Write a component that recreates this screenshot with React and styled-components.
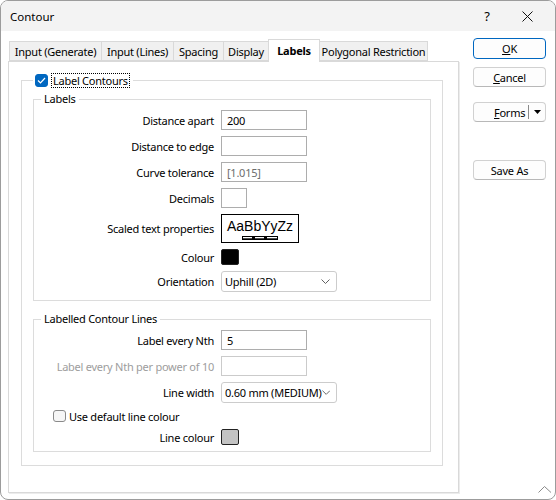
import React from 'react';
import styled, { createGlobalStyle } from 'styled-components';

const GlobalStyle = createGlobalStyle`
  html, body {
    margin: 0;
    padding: 0;
    background: #fff;
  }
  body {
    font-family: "Segoe UI", "Noto Sans", sans-serif;
    font-size: 11px;
    letter-spacing: -0.25px;
    color: #000;
  }
  *, *:before, *:after {
    box-sizing: border-box;
  }
`;

const Window = styled.div`
  position: relative;
  width: 556px;
  height: 500px;
  border: 1px solid #9c9c9c;
  border-radius: 8px;
  overflow: hidden;
  background: #fff;
  display: flex;
  flex-direction: column;
`;

const TitleBar = styled.div`
  height: 30px;
  flex: none;
  background: #f3f3f3;
  display: flex;
  align-items: center;
  padding: 0 8px 0 9px;
  font-size: 11.5px;
  letter-spacing: 0;
`;

const TitleText = styled.span`
  flex: 1;
`;

const CaptionButton = styled.div`
  width: 40px;
  height: 30px;
  display: flex;
  align-items: center;
  justify-content: center;
  font-size: 13px;
`;

const Body = styled.div`
  flex: 1;
  display: flex;
  padding: 7px 9px 0 7px;
`;

const TabsColumn = styled.div`
  width: 451px;
  display: flex;
  flex-direction: column;
`;

const TabRow = styled.div`
  height: 23px;
  display: flex;
  align-items: flex-end;
  padding-left: 1px;
  position: relative;
  z-index: 1;
`;

const Tab = styled.div`
  width: ${p => p.$w}px;
  height: ${p => (p.$active ? 23 : 20)}px;
  margin-right: -1px;
  margin-bottom: ${p => (p.$active ? -1 : 0)}px;
  border: 1px solid #d9d9d9;
  border-bottom: ${p => (p.$active ? 'none' : '1px solid #d9d9d9')};
  background: ${p => (p.$active ? '#fff' : '#f0f0f0')};
  font-weight: ${p => (p.$active ? 700 : 400)};
  display: flex;
  align-items: center;
  justify-content: center;
  padding-bottom: ${p => (p.$active ? 2 : 0)}px;
  white-space: nowrap;
  position: relative;
  z-index: ${p => (p.$active ? 2 : 1)};
`;

const Panel = styled.div`
  height: 432px;
  border: 1px solid #d9d9d9;
  box-shadow: 1px 1px 0 #ececec;
  background: #fff;
  padding: 11px 0 0 12px;
`;

const Group = styled.fieldset`
  margin: ${p => p.$margin || '0'};
  width: ${p => p.$w}px;
  border: 1px solid #dcdcdc;
  padding: ${p => p.$pad || '0'};
  min-inline-size: 0;
`;

const Legend = styled.legend`
  margin-left: ${p => p.$ml || 7}px;
  padding: 0 3px 0 ${p => p.$pl || 3}px;
  line-height: 16px;
  display: flex;
  align-items: center;
`;

const FocusText = styled.span`
  border: 1px dotted #000;
  padding: 0 1px;
  line-height: 13px;
`;

const Check = styled.span`
  width: 13px;
  height: ${p => p.$h || 13}px;
  border-radius: 3px;
  border: 1px solid ${p => (p.$checked ? '#0067c0' : '#8a8a8a')};
  background: ${p => (p.$checked ? '#0067c0' : '#f6f6f6')};
  display: inline-flex;
  align-items: center;
  justify-content: center;
  margin-right: 3px;
  flex: none;
`;

const FormGrid = styled.div`
  display: grid;
  grid-template-columns: 180px 1fr;
  column-gap: 7px;
  row-gap: 6px;
  align-items: center;
`;

const Label = styled.div`
  text-align: right;
  white-space: nowrap;
  color: ${p => (p.$disabled ? '#9d9d9d' : '#000')};
`;

const Field = styled.div`
  width: ${p => p.$w || 86}px;
  height: 20px;
  border: 1px solid ${p => (p.$disabled ? '#cbcbcb' : '#adadad')};
  background: #fff;
  padding-left: 5px;
  display: flex;
  align-items: center;
  color: ${p => (p.$muted ? '#6d6d6d' : '#000')};
`;

const Select = styled.div`
  width: 116px;
  height: 21px;
  border: 1px solid #cccccc;
  border-radius: 3px;
  background: #fff;
  padding: 0 6px 0 3px;
  display: flex;
  align-items: center;
  justify-content: space-between;
  white-space: nowrap;
`;

const Preview = styled.div`
  width: 78px;
  height: 29px;
  border: 1px solid #000;
  display: flex;
  flex-direction: column;
  align-items: center;
  padding-top: 4px;

  svg {
    display: block;
    margin-top: 2px;
  }
`;

const PreviewText = styled.span`
  font-family: "Liberation Sans", Arial, sans-serif;
  font-size: 14px;
  line-height: 15px;
  letter-spacing: 0;
`;

const Swatch = styled.div`
  width: 18px;
  height: 16px;
  border-radius: 2px;
  background: ${p => p.$color};
  border: 1px solid #222;
`;

const CheckRow = styled.div`
  grid-column: 1 / -1;
  height: 14px;
  padding-left: 19px;
  display: flex;
  align-items: center;
`;

const ButtonColumn = styled.div`
  width: 73px;
  margin-left: 14px;
  display: flex;
  flex-direction: column;
`;

const Button = styled.div`
  height: ${p => (p.$primary ? 21 : 20)}px;
  margin-top: ${p => p.$mt || 0}px;
  border: 1px solid ${p => (p.$primary ? '#0067c0' : '#d1d1d1')};
  border-bottom-color: ${p => (p.$primary ? '#0067c0' : '#b8b8b8')};
  border-radius: 4px;
  background: #fdfdfd;
  display: flex;
  align-items: center;
  justify-content: center;
`;

const SplitMain = styled.span`
  flex: 1;
  padding-left: 20px;
  text-align: left;
`;

const SplitArrow = styled.span`
  width: 17px;
  height: 14px;
  border-left: 1px solid #8a8a8a;
  display: flex;
  align-items: center;
  justify-content: center;
`;

const Grip = styled.svg`
  position: absolute;
  right: 3px;
  bottom: 6px;
`;

const Chevron = () => (
  <svg width="9" height="5" viewBox="0 0 9 5">
    <polyline points="0.5,0.5 4.5,4.5 8.5,0.5" fill="none" stroke="#606060" strokeWidth="1" />
  </svg>
);

function TextRow({ label, value, w, disabled, muted }) {
  return (
    <>
      <Label $disabled={disabled}>{label}</Label>
      <Field $w={w} $disabled={disabled} $muted={muted}>{value}</Field>
    </>
  );
}

const tabs = [
  { name: 'Input (Generate)', w: 93 },
  { name: 'Input (Lines)', w: 73 },
  { name: 'Spacing', w: 51 },
  { name: 'Display', w: 46 },
  { name: 'Labels', w: 52, active: true },
  { name: 'Polygonal Restriction', w: 109 },
];

export default function App() {
  return (
    <>
      <GlobalStyle />
      <Window>
        <TitleBar>
          <TitleText>Contour</TitleText>
          <CaptionButton>?</CaptionButton>
          <CaptionButton>
            <svg width="11" height="11" viewBox="0 0 11 11">
              <path d="M0.5 0.5 L10.5 10.5 M10.5 0.5 L0.5 10.5" stroke="#111" strokeWidth="1" />
            </svg>
          </CaptionButton>
        </TitleBar>
        <Body>
          <TabsColumn>
            <TabRow>
              {tabs.map(t => (
                <Tab key={t.name} $w={t.w} $active={t.active}>{t.name}</Tab>
              ))}
            </TabRow>
            <Panel>
              <Group $w={422} $pad="0 0 13px 0">
                <Legend $ml={11} $pl={2}>
                  <Check $checked>
                    <svg width="9" height="7" viewBox="0 0 9 7">
                      <polyline points="1,3.5 3.5,6 8,1" fill="none" stroke="#fff" strokeWidth="1.2" />
                    </svg>
                  </Check>
                  <FocusText>Label Contours</FocusText>
                </Legend>

                <Group $w={398} $margin="3px 0 0 11px" $pad="3px 0 8px 0">
                  <Legend>Labels</Legend>
                  <FormGrid>
                    <TextRow label="Distance apart" value="200" />
                    <TextRow label="Distance to edge" value="" />
                    <TextRow label="Curve tolerance" value="[1.015]" muted />
                    <TextRow label="Decimals" value="" w={26} />
                    <Label>Scaled text properties</Label>
                    <Preview>
                      <PreviewText>AaBbYyZz</PreviewText>
                      <svg width="36" height="4" viewBox="0 0 36 4">
                        <rect x="0" y="0" width="36" height="4" fill="#000" />
                        <rect x="1" y="1" width="9" height="1.3" fill="#fff" />
                        <rect x="13" y="1" width="9" height="1.3" fill="#fff" />
                        <rect x="25" y="1" width="10" height="1.3" fill="#fff" />
                      </svg>
                    </Preview>
                    <Label>Colour</Label>
                    <Swatch $color="#000" />
                    <Label>Orientation</Label>
                    <Select>
                      <span>Uphill (2D)</span>
                      <Chevron />
                    </Select>
                  </FormGrid>
                </Group>

                <Group $w={398} $margin="10px 0 0 11px" $pad="3px 0 6px 0">
                  <Legend>Labelled Contour Lines</Legend>
                  <FormGrid>
                    <TextRow label="Label every Nth" value="5" />
                    <TextRow label="Label every Nth per power of 10" value="" disabled />
                    <Label>Line width</Label>
                    <Select>
                      <span>0.60 mm (MEDIUM)</span>
                      <Chevron />
                    </Select>
                    <CheckRow>
                      <Check $h={12} />
                      <span>Use default line colour</span>
                    </CheckRow>
                    <Label>Line colour</Label>
                    <Swatch $color="#c3c3c3" />
                  </FormGrid>
                </Group>
              </Group>
            </Panel>
          </TabsColumn>

          <ButtonColumn>
            <Button $primary><span><u>O</u>K</span></Button>
            <Button $mt={8}><span><u>C</u>ancel</span></Button>
            <Button $mt={15}>
              <SplitMain><u>F</u>orms</SplitMain>
              <SplitArrow>
                <svg width="7" height="4" viewBox="0 0 7 4">
                  <polygon points="0,0 7,0 3.5,4" fill="#000" />
                </svg>
              </SplitArrow>
            </Button>
            <Button $mt={38}>Save As</Button>
          </ButtonColumn>
        </Body>
        <Grip width="14" height="8" viewBox="0 0 14 8">
          <polyline points="0.5,7.5 6.5,1.5 13,7.5" fill="none" stroke="#8a8a8a" strokeWidth="1" />
        </Grip>
      </Window>
    </>
  );
}
